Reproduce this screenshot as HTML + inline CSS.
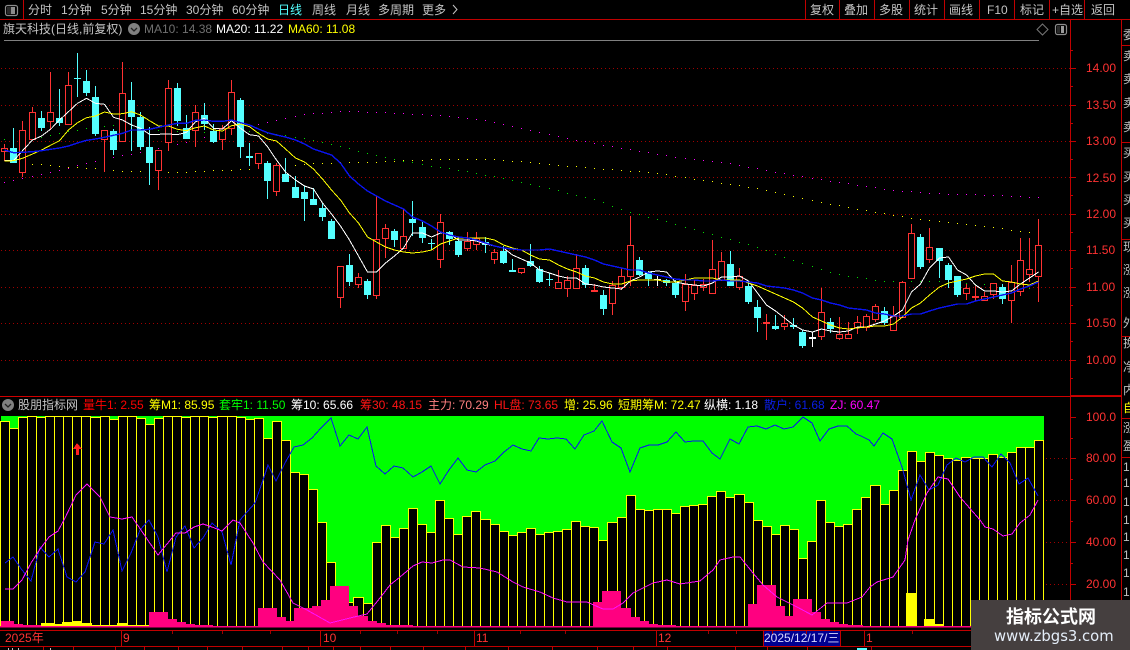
<!DOCTYPE html>
<html><head><meta charset="utf-8">
<style>
html,body{margin:0;padding:0;background:#000;width:1130px;height:650px;overflow:hidden}
#p{position:relative;width:1130px;height:650px;overflow:hidden;background:#000;font-family:"Liberation Sans","WenQuanYi Zen Hei","Noto Sans CJK SC",sans-serif;font-size:12px}
svg{position:absolute;left:0;top:0}
.t{position:absolute;white-space:nowrap;height:14px;line-height:14px}
.g{color:#c4c4c4}.r{color:#ff3232}
#side{position:absolute;left:1122px;top:20px;width:8px;height:630px;overflow:hidden;color:#c0c0c0}
#side span{position:absolute;left:1px;line-height:14px;white-space:nowrap}
#wm{position:absolute;left:971px;top:600px;width:159px;height:50px;background:#453f3f}
#wm div{position:absolute;white-space:nowrap}
</style></head><body><div id="p">
<svg id="s" width="1130" height="650" viewBox="0 0 1130 650" shape-rendering="crispEdges"></svg>

<span class="t g" style="left:28px;top:3px">分时</span>
<span class="t g" style="left:61px;top:3px">1分钟</span>
<span class="t g" style="left:101px;top:3px">5分钟</span>
<span class="t g" style="left:140px;top:3px">15分钟</span>
<span class="t g" style="left:186px;top:3px">30分钟</span>
<span class="t g" style="left:232px;top:3px">60分钟</span>
<span class="t" style="left:278px;top:3px;color:#54ffff">日线</span>
<span class="t g" style="left:312px;top:3px">周线</span>
<span class="t g" style="left:346px;top:3px">月线</span>
<span class="t g" style="left:378px;top:3px">多周期</span>
<span class="t g" style="left:422px;top:3px">更多</span>
<span class="t g" style="left:810px;top:3px">复权</span>
<span class="t g" style="left:844px;top:3px">叠加</span>
<span class="t g" style="left:879px;top:3px">多股</span>
<span class="t g" style="left:914px;top:3px">统计</span>
<span class="t g" style="left:949px;top:3px">画线</span>
<span class="t g" style="left:987px;top:3px">F10</span>
<span class="t g" style="left:1020px;top:3px">标记</span>
<span class="t g" style="left:1052px;top:3px">+自选</span>
<span class="t g" style="left:1091px;top:3px">返回</span>

<span class="t g" style="left:3px;top:22px">旗天科技(日线,前复权)</span>
<span class="t" style="left:144px;top:22px;color:#707070">MA10: 14.38</span>
<span class="t" style="left:216px;top:22px;color:#fff">MA20: 11.22</span>
<span class="t" style="left:288px;top:22px;color:#ffff00">MA60: 11.08</span>

<span class="t r" style="left:1086px;top:61px">14.00</span>
<span class="t r" style="left:1086px;top:98px">13.50</span>
<span class="t r" style="left:1086px;top:134px">13.00</span>
<span class="t r" style="left:1086px;top:171px">12.50</span>
<span class="t r" style="left:1086px;top:207px">12.00</span>
<span class="t r" style="left:1086px;top:243px">11.50</span>
<span class="t r" style="left:1086px;top:280px">11.00</span>
<span class="t r" style="left:1086px;top:316px">10.50</span>
<span class="t r" style="left:1086px;top:353px">10.00</span>

<span class="t g" style="left:18px;top:398px">股朋指标网</span>
<span class="t" style="left:83px;top:398px;color:#ff0000">量牛1: 2.55</span>
<span class="t" style="left:149px;top:398px;color:#ffff00">筹M1: 85.95</span>
<span class="t" style="left:219px;top:398px;color:#00ff00">套牢1: 11.50</span>
<span class="t" style="left:291px;top:398px;color:#fff">筹10: 65.66</span>
<span class="t" style="left:360px;top:398px;color:#ff1414">筹30: 48.15</span>
<span class="t" style="left:428px;top:398px;color:#ff8080">主力: 70.29</span>
<span class="t" style="left:494px;top:398px;color:#ff1414">HL盘: 73.65</span>
<span class="t" style="left:564px;top:398px;color:#ffff00">增: 25.96</span>
<span class="t" style="left:618px;top:398px;color:#ffff00">短期筹M: 72.47</span>
<span class="t" style="left:704px;top:398px;color:#fff">纵横: 1.18</span>
<span class="t" style="left:764px;top:398px;color:#0a1ee6">散户: 61.68</span>
<span class="t" style="left:830px;top:398px;color:#ff00ff">ZJ: 60.47</span>

<span class="t r" style="left:1086px;top:410px">100.0</span>
<span class="t r" style="left:1086px;top:451px">80.00</span>
<span class="t r" style="left:1086px;top:493px">60.00</span>
<span class="t r" style="left:1086px;top:535px">40.00</span>
<span class="t r" style="left:1086px;top:577px">20.00</span>

<span class="t r" style="left:5px;top:631px">2025年</span>
<span class="t r" style="left:123px;top:631px">9</span>
<span class="t r" style="left:323px;top:631px">10</span>
<span class="t r" style="left:476px;top:631px">11</span>
<span class="t r" style="left:658px;top:631px">12</span>
<span class="t r" style="left:866px;top:631px">1</span>
<span class="t" style="left:764px;top:631px;color:#d8d8ff">2025/12/17/三</span>

<div id="side">
<span style="top:8px">委</span>
<span style="top:29px">卖</span><span style="top:52px">卖</span><span style="top:76px">卖</span><span style="top:100px">卖</span>
<span style="top:126px">买</span><span style="top:150px">买</span><span style="top:173px">买</span><span style="top:196px">买</span>
<span style="top:220px">现</span><span style="top:243px">涨</span><span style="top:266px">涨</span><span style="top:296px">外</span>
<span style="top:316px">换</span><span style="top:340px">净</span><span style="top:363px">内</span>
<span style="top:381px;color:#ffff00">自</span>
<span style="top:401px">涨</span><span style="top:419px">盈</span>
<span style="top:440px">1</span><span style="top:456px">1</span><span style="top:475px">1</span><span style="top:493px">1</span><span style="top:510px">1</span><span style="top:528px">1</span><span style="top:546px">1</span><span style="top:565px">1</span>
</div>

<div id="wm">
<div style="left:35px;top:4px;font-size:18px;font-weight:bold;color:#fff;font-family:'Noto Sans CJK SC',sans-serif;line-height:24px">指标公式网</div>
<div style="left:23px;top:27px;font-size:14.8px;color:#e4edf8;font-family:'DejaVu Sans',sans-serif;line-height:20px">www.zbgs3.com</div>
</div>

<script>
(function(){
var s=document.getElementById('s'),o='';
function R(x,y,w,h,f){o+='<rect x="'+x+'" y="'+y+'" width="'+w+'" height="'+h+'" fill="'+f+'"/>';}
function L(x1,y1,x2,y2,c,e){o+='<line x1="'+x1+'" y1="'+y1+'" x2="'+x2+'" y2="'+y2+'" stroke="'+c+'" stroke-width="1"'+(e||'')+'/>';}
function X(i){return 4.3+9.07*i;}
function PL(a,c,w,off){var p=[];for(var i=0;i<a.length;i++)p.push(Math.round(X(i))+(off||0.5)+','+a[i]);
 o+='<polyline points="'+p.join(' ')+'" fill="none" stroke="'+c+'" stroke-width="'+(w||1)+'"/>';}
function PX(a,c){var p=[];for(var i=0;i<a.length;i++)p.push(a[i][0]+','+a[i][1]);
 o+='<polyline points="'+p.join(' ')+'" fill="none" stroke="'+c+'" stroke-width="1"/>';}
function itp(pts,x){if(x<pts[0][0])return pts[0][1];for(var i=1;i<pts.length;i++){if(x<=pts[i][0]){var a=pts[i-1],b=pts[i];return a[1]+(b[1]-a[1])*(x-a[0])/(b[0]-a[0]);}}return pts[pts.length-1][1];}
var RD='#c00000',DR='#a00000';

/* frame */
L(0,19.5,1130,19.5,RD);
L(23.5,0,23.5,19,RD);
[805.5,839.5,874.5,909.5,944.5,979.5,1014.5,1049.5,1084.5].forEach(function(x){L(x,0,x,19,RD);});
L(1070.5,20,1070.5,650,RD);
L(1121.5,20,1121.5,650,RD);
L(0,396.5,1122,396.5,'#d00000');
L(1070,395.5,1122,395.5,RD);
L(0,630.5,1130,630.5,RD);
L(0,646.5,1130,646.5,RD);
[45,142,239,336].forEach(function(y){L(1122,y+.5,1130,y+.5,RD);});
[418,457].forEach(function(y){L(1122,y+.5,1130,y+.5,RD);});
R(4,40,1035,1,'#808080');

/* price grid */
[68,105,141,177,214,250,287,323,360].forEach(function(y,k){
 for(var x=1;x<1070;x+=4)R(x,y,1,1,DR);
 L(1070,y+.5,1076,y+.5,RD);
 if(k<8)L(1070,y+18.5,1073,y+18.5,RD);
});
L(1070,50.5,1073,50.5,RD);L(1070,378.5,1073,378.5,RD);

/* long MA dots */
var M=[[4,182],[13,180],[22,178],[31,176],[49,172],[67,168],[86,163],[104,159],[122,155],[140,152],[158,148],[176,144],[194,140],[212,135],[231,131],[249,126],[267,122],[276,120],[305,114],[345,111],[384,112],[439,115],[479,119],[519,128],[549,134],[588,142],[628,149],[678,157],[728,163],[777,172],[812,178],[852,184],[892,190],[932,193],[991,195],[1039,197]];
var Y=[[22,163],[40,164],[58,166],[76,167],[95,168],[113,170],[131,171],[158,172],[185,172],[203,171],[222,170],[240,169],[258,168],[276,167],[310,163],[369,162],[434,159],[494,159],[549,164],[608,169],[658,173],[703,180],[757,188],[807,199],[857,209],[912,218],[966,224],[1039,233]];
var GR=[[4,139],[22,138],[40,137],[58,133],[76,130],[95,127],[113,125],[122,126],[140,127],[158,130],[176,131],[194,132],[240,130],[276,134],[305,138],[340,146],[369,154],[409,162],[459,170],[504,178],[549,188],[593,199],[628,211],[668,222],[708,233],[748,244],[787,258],[832,273],[882,281],[932,281],[981,284],[1039,289]];
for(var i=0;i<115;i++){var x=Math.round(X(i));
 R(x,Math.round(itp(M,x)),1,1,'#ff00ff');
 if(i>1)R(x,Math.round(itp(Y,x)),1,1,'#ffff00');
 R(x,Math.round(itp(GR,x)),1,1,'#00e000');
}

/* candles */
var G=[[40,0,[
'R',325,332,312,362,'C',324,368,264,370,'R',271,395,243,412,'R',217,296,202,300,'C',235,264,213,273,'R',217,242,96,270,'C',235,249,148,258,'R',136,251,96,252,'C',114,117,40,170,'C',124,159,90,168,'C',171,282,138,288,'R',271,296,271,396,'C',273,330,268,345,'R',160,302,66,302,'C',181,231,126,333,'C',231,321,216,330,'C',321,369,261,435,'R',331,389,331,450,'R',145,305,120,333,'C',144,243,129,258,'C',264,297,225,297,'R',217,269,195,321,'C',225,252,189,270,'C',273,306,252,309,'R',265,296,255,330,'R',157,265,120,285,'C',180,321,174,354,'C',348,354,309,378,'R',340,368,340,386,'C',369,423,363,477,'R',376,452,370,468]],
[190,31,[
'C',-49,-24,-96,-24,'C',-9,24,-42,24,'C',6,27,-12,93,'C',27,45,-6,45,'C',54,81,39,93,'C',93,147,87,147,'R',229,320,229,353,'C',225,276,193,288,'R',262,281,250,293,'C',273,315,268,326,'R',148,314,18,327,'R',115,143,102,204,'C',124,150,117,172,'R',139,173,57,178,'C',87,99,33,137,'C',111,144,96,158,'C',159,162,147,180,'R',97,206,72,234,'C',127,148,123,165,'C',153,195,140,201,'R',153,174,126,183,'R',144,161,126,180,'C',156,165,141,189,'R',186,207,176,222,'C',183,219,168,222,'C',240,246,207,246,'R',235,245,235,252,'C',213,228,162,232,'C',237,276,228,279,'C',266,270,250,288,'R',276,293,240,293]],
[210,62,[
'R',210,233,198,262,'R',175,233,132,235,'C',174,225,165,233,'R',240,245,222,246,'C',255,297,240,315,'R',225,278,213,315,'R',198,232,174,241,'R',106,197,18,228,'C',150,195,141,198,'C',186,208,183,228,'W',208,211,198,228,'C',210,219,207,228,'C',219,255,210,264,'R',222,272,192,303,'R',225,248,210,270,'R',222,232,207,243,'R',178,248,90,248,'R',153,210,126,210,'C',162,228,123,228,'R',198,231,174,240,'C',228,276,213,282,'C',291,324,270,366,'R',337,341,312,390,'C',348,357,315,360,'R',339,347,315,360,'C',346,350,324,357,'C',366,408,360,414,'W',382,386,366,411,'R',307,377,234,390,'C',336,357,324,369,'R',372,384,321,390]],
[210,93,[
'R',373,383,335,383,'R',337,350,318,372,'R',319,350,312,362,'R',289,326,283,335,'C',304,339,292,346,'R',318,359,288,359,'R',217,320,212,320,'R',70,203,42,203,'C',82,171,72,176,'R',110,146,54,160,'C',115,152,115,204,'C',165,209,158,234,'C',198,255,198,261,'R',235,250,222,270,'R',258,264,228,273,'R',259,271,246,273,'R',220,251,220,267,'C',232,266,222,281,'R',215,271,165,339,'R',151,244,84,258,'R',178,193,84,217,'R',106,199,27,276]]];
G.forEach(function(g){var off=g[0],st=g[1],a=g[2];
 for(var k=0;k<a.length;k+=5){var i=st+k/5,x=Math.round(X(i));
  var t=Math.round(off+a[k+1]/3),b=Math.round(off+a[k+2]/3),wt=Math.round(off+a[k+3]/3),wb=Math.round(off+a[k+4]/3),ty=a[k];
  var c=ty=='R'?'#ff3232':ty=='C'?'#54ffff':'#ffffff';
  R(x,wt,1,Math.max(1,wb-wt),c);
  if(ty=='R'){
   if(b-t<=2){R(x-3,t,7,Math.max(1,b-t),c);}
   else{o+='<rect x="'+(x-2.5)+'" y="'+(t+.5)+'" width="6" height="'+(b-t)+'" fill="#000" stroke="'+c+'" stroke-width="1"/>';}
  }else{R(x-3,t,7,Math.max(1,b-t),c);}
 }
});

/* MA lines */
var white=[160.7,160.7,150.7,140,136,129.3,120,111.7,103.3,98.3,103.3,104.3,117.3,120,125,128.3,134.3,134.3,134,134.7,132.3,121.7,118.3,128.3,129,120.7,128.3,134.7,136,146.7,160,172,180,186,189,203,214,226,240,256,272,272,263,256,248,233,233,237,233,234,240,240,241,244,246,248,255,259,263,270,273,276,278,278,284,285,287,288,289,281,277,272,271,272,282,284,285,286,283,277,277,276,281,293,305,311,318,325,330,332,329,331,332,331,327,327,324,321,316,310,292,284,268,258,257,270,275,285,291,291,292,291,284,278,272];
var yellow=[161,160.7,158.3,154,150,145.3,140.7,130,122.7,117.7,116,112,114,113.7,111.7,115,120.7,126,126,129.3,130.7,127.7,126,130,131,125.7,124,126.7,133.3,139,141,149,158,162,169,179,190,200,213,223,237,242,247,250,252,253,252,250,244,241,238,238,238,238,240,245,248,250,255,259,260,265,269,272,276,278,282,284,284,281,280,280,280,282,282,280,278,278,278,280,280,280,283,286,290,294,298,302,308,317,321,325,328,329,328,327,326,326,324,317,308,303,295,287,283,281,279,276,274,274,281,282,284,285,281];
var blue=[150,152.7,152.3,151.7,150.7,149.3,148,146,143,140.3,139,137.3,135.3,133.3,130,130,129.3,127.3,125,123.3,123.3,120.3,120,121.3,121.3,120,122.7,125,129,132.7,135,137,140,144,149,152,155,163,176,184,191,196,201,205,209,217,221,226,232,235,237,238,240,243,246,248,249,250,250,250,249,251,253,255,257,260,264,266,268,270,270,273,275,277,279,280,280,281,281,280,281,281,282,283,286,287,288,290,293,298,300,303,305,308,309,310,313,314,316,316,314,314,311,308,306,304,304,301,299,297,295,293,289,286,282];
PL(white,'#ffffff');PL(yellow,'#ffff00');
PL(blue,'#0a14f0',1.4);

/* lower panel */
R(1,416,1043,211,'#00ff00');
[458,500,542,584].forEach(function(y){for(var x=1046;x<1068;x+=4)R(x,y,1,1,DR);});
[417,458,500,542,584].forEach(function(y,k){L(1070,y+.5,1076,y+.5,RD);if(k<4)L(1070,y+21.5,1073,y+21.5,RD);});
L(1070,605.5,1073,605.5,RD);
var tops=[421,428,417,416,417,416,416,416,416,416,417,416,419,416,416,418,424,418,416,416,417,416,416,417,416,416,417,419,418,438,421,440,472,474,489,522,562,590,602,597,603,542,525,537,528,508,524,532,500,518,534,516,511,519,524,531,535,532,528,534,532,531,529,521,526,527,540,522,517,495,509,510,509,509,513,506,505,504,496,491,497,494,502,520,526,534,525,529,558,541,500,522,526,524,509,497,485,504,490,470,451,461,452,455,458,460,457,458,458,454,457,452,447,447,440];
for(var i=0;i<115;i++){
 var l=Math.round(X(i)-4.54),r=Math.round(X(i+1)-4.54);
 o+='<rect x="'+(l+.5)+'" y="'+(tops[i]+.5)+'" width="'+(r-l)+'" height="'+(626-tops[i])+'" fill="#000" stroke="#ffff00" stroke-width="1"/>';
}
/* yellow low bars */
[[23,150,625],[41,55,623],[55,62,624],[62,72,622],[72,82,621],[82,92,623],[117,128,623],[906,917,593],[924,935,619],[935,944,624]].forEach(function(b){R(b[0],b[2],b[1]-b[0],627-b[2],'#ffff00');});
/* pink */
R(0,626,1044,1.5,'#ff0080');
[[1,14,621],[14,23,624],[23,41,625],[41,117,626],[149,168,612],[168,177,619],[177,186,622],[186,195,624],[195,213,625],[258,277,608],[277,286,617],[286,294,621],[294,312,608],[312,321,606],[321,330,600],[330,349,586],[349,358,606],[358,368,616],[368,377,621],[377,386,623],[386,413,625],[593,602,602],[602,621,591],[621,631,608],[631,640,617],[640,649,621],[649,658,624],[658,676,625],[748,757,604],[757,776,585],[776,785,606],[785,793,616],[793,812,599],[812,821,612],[821,830,619],[830,839,622],[839,848,624],[848,863,625]].forEach(function(b){R(b[0],b[2],b[1]-b[0],627-b[2],'#ff0080');});

/* indicator lines */
var bl=[[5,563],[13,557],[22,570],[31,581],[40,547],[49,557],[58,549],[67,577],[76,582],[85,572],[95,542],[104,544],[113,530],[122,571],[131,553],[140,530],[149,520],[158,537],[167,572],[176,537],[185,526],[194,548],[203,538],[212,523],[222,532],[231,565],[240,520],[255,503],[262,483],[268,465],[276,481],[285,463],[294,447],[303,445],[312,438],[321,428],[331,418],[340,446],[349,435],[358,439],[367,427],[376,466],[385,474],[394,466],[403,468],[413,477],[422,472],[431,466],[440,484],[449,470],[458,458],[467,470],[476,472],[485,465],[495,461],[504,452],[513,445],[522,449],[531,451],[539,438],[548,439],[557,438],[566,439],[575,449],[584,435],[594,431],[602,421],[612,442],[621,448],[630,472],[640,448],[649,445],[658,445],[667,442],[676,432],[685,442],[694,441],[703,441],[712,453],[720,459],[730,439],[739,444],[748,427],[757,426],[766,429],[775,425],[784,429],[793,427],[803,417],[812,423],[820,441],[829,429],[838,426],[847,426],[856,434],[861,436],[869,440],[874,446],[883,433],[892,439],[902,467],[911,500],[920,475],[929,490],[938,485],[947,465],[956,458],[965,462],[974,457],[983,457],[992,467],[1001,454],[1010,463],[1019,484],[1028,478],[1038,496]];
PX(bl,'#0a14f0');
var mg=[[5,589],[13,589],[22,580],[31,563],[40,549],[49,537],[58,531],[65,518],[76,495],[87,484],[100,497],[110,517],[122,519],[132,517],[143,533],[158,555],[176,533],[185,533],[194,527],[203,524],[212,527],[222,531],[233,520],[240,523],[253,543],[263,562],[280,580],[293,603],[307,610],[330,623],[350,618],[367,614],[380,598],[390,585],[400,577],[413,566],[422,562],[432,563],[443,560],[450,560],[463,567],[480,568],[497,572],[513,582],[523,587],[540,592],[553,598],[567,602],[587,602],[603,609],[613,609],[623,603],[633,593],[653,583],[667,580],[680,584],[700,581],[713,570],[720,560],[733,557],[740,557],[753,573],[763,585],[777,597],[797,607],[812,615],[827,603],[847,603],[862,597],[870,587],[877,582],[893,577],[905,560],[908,540],[915,520],[927,493],[938,477],[948,479],[960,497],[980,520],[985,527],[993,529],[1003,536],[1012,534],[1020,523],[1030,515],[1038,500]];
PX(mg,'#ff10ff');

/* red arrow */
o+='<polygon points="77,443 82,449 79,449 79,455 76,455 76,449 73,449" fill="#ff2020"/>';

/* date axis */
R(763,631,77,15,'#000090');
[121,320,474,656,763,840,864].forEach(function(x){L(x+.5,630,x+.5,646,RD);});
[172,222,270,360,397,437,520,565,708,736,772,806,912].forEach(function(x){L(x+.5,631,x+.5,634,'#a00000');});
[43,73,115,144,178,207,242,282,308,333,360,390,423,465,508,552,597,633,667,735,767,807,871].forEach(function(x){L(x+.5,647,x+.5,650,RD);});
R(8,648,1,2,'#c0c0c0');R(12,648,1,2,'#c0c0c0');R(18,648,1,2,'#c0c0c0');R(50,648,1,2,'#c0c0c0');
R(857,648,10,2,'#54ffff');

o+='<g shape-rendering="geometricPrecision">';
/* icons */
function box(x,y,w,h){o+='<rect x="'+(x+.5)+'" y="'+(y+.5)+'" width="'+w+'" height="'+h+'" rx="2" fill="none" stroke="#8c8c8c" stroke-width="1.2"/>';}
box(5,5,12,10);R(11,7,4,7,'#8c8c8c');R(7,7,4,7,'#2a2a2a');
box(1055,24,11,10);R(1061,26,3,7,'#9a9a9a');R(1057,26,3,7,'#2a2a2a');
o+='<polygon points="1042.5,24 1048,29.5 1042.5,35 1037,29.5" fill="none" stroke="#777" stroke-width="1"/>';
function cir(cx,cy){o+='<circle cx="'+cx+'" cy="'+cy+'" r="6" fill="#808080"/><polyline points="'+(cx-3)+','+(cy-1)+' '+cx+','+(cy+2)+' '+(cx+3)+','+(cy-1)+'" fill="none" stroke="#222" stroke-width="1.3"/>';}
cir(134,29);cir(8,405);
o+='<polyline points="453,5 457,9.5 453,14" fill="none" stroke="#c4c4c4" stroke-width="1"/>';
o+='</g>';
s.innerHTML=o;
})();
</script>
</div></body></html>
